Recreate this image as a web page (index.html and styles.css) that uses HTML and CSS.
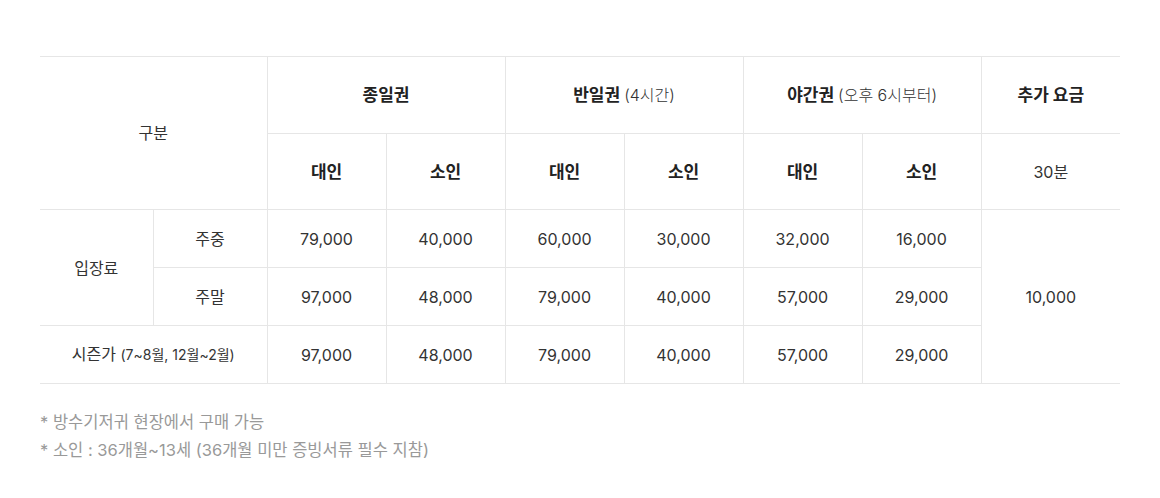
FILE: index.html
```html
<!DOCTYPE html>
<html lang="ko">
<head>
<meta charset="utf-8">
<title>요금 안내</title>
<link rel="stylesheet" href="styles.css">
</head>
<body>
<div class="wrap">
  <table class="price">
    <colgroup>
      <col class="c-a"><col class="c-b">
      <col class="c-d"><col class="c-d"><col class="c-d"><col class="c-d"><col class="c-d"><col class="c-d">
      <col class="c-e">
    </colgroup>
    <thead>
      <tr class="h1">
        <th colspan="2" rowspan="2" class="reg">구분</th>
        <th colspan="2">종일권</th>
        <th colspan="2">반일권 <span class="sub">(4시간)</span></th>
        <th colspan="2">야간권 <span class="sub">(오후 6시부터)</span></th>
        <th>추가 요금</th>
      </tr>
      <tr class="h2">
        <th>대인</th><th>소인</th>
        <th>대인</th><th>소인</th>
        <th>대인</th><th>소인</th>
        <th class="reg">30분</th>
      </tr>
    </thead>
    <tbody>
      <tr>
        <td rowspan="2">입장료</td>
        <td>주중</td>
        <td>79,000</td><td>40,000</td><td>60,000</td><td>30,000</td><td>32,000</td><td>16,000</td>
        <td rowspan="3">10,000</td>
      </tr>
      <tr>
        <td>주말</td>
        <td>97,000</td><td>48,000</td><td>79,000</td><td>40,000</td><td>57,000</td><td>29,000</td>
      </tr>
      <tr>
        <td colspan="2">시즌가 <span class="small">(7~8월, 12월~2월)</span></td>
        <td>97,000</td><td>48,000</td><td>79,000</td><td>40,000</td><td>57,000</td><td>29,000</td>
      </tr>
    </tbody>
  </table>
  <ul class="notes">
    <li>* 방수기저귀 현장에서 구매 가능</li>
    <li>* 소인 : 36개월~13세 (36개월 미만 증빙서류 필수 지참)</li>
  </ul>
</div>
</body>
</html>
```

FILE: styles.css
```css
html, body {
  margin: 0;
  padding: 0;
  background: #fff;
}
body {
  font-family: Inter, "Noto Sans CJK KR", "Noto Sans", sans-serif;
  color: #333;
}
.wrap {
  padding: 56px 40px 0 40px;
}
.price {
  width: 1080px;
  border-collapse: collapse;
  table-layout: fixed;
}
.c-a { width: 113px; }
.c-b { width: 114px; }
.c-d { width: 119px; }
.c-e { width: 139px; }
.price th, .price td {
  border: 1px solid #e6e6e6;
  text-align: center;
  vertical-align: middle;
  font-size: 16px;
  padding: 0;
  line-height: 20px;
}
.price tr > :first-child { border-left: none; }
.price tr > :last-child { border-right: none; }
.price tbody tr:nth-child(2) > td:first-child { border-left: 1px solid #e6e6e6; }
.price tbody tr:nth-child(2) > td:last-child { border-right: 1px solid #e6e6e6; }
.price tbody tr:nth-child(3) > td:last-child { border-right: 1px solid #e6e6e6; }
.price th {
  font-weight: 700;
  font-size: 17px;
  color: #222;
}
.price th.reg {
  font-weight: 400;
  font-size: 16px;
  color: #333;
}
.price thead tr.h1 { height: 77px; }
.price thead tr.h2 { height: 76px; }
.price tbody tr { height: 58px; }
.sub {
  font-size: 16px;
  font-weight: 300;
  color: #333;
}
.small {
  font-size: 14px;
}
.notes {
  list-style: none;
  margin: 24px 0 0 0;
  padding: 0;
  color: #999;
  font-size: 16.5px;
  line-height: 28px;
}
```
